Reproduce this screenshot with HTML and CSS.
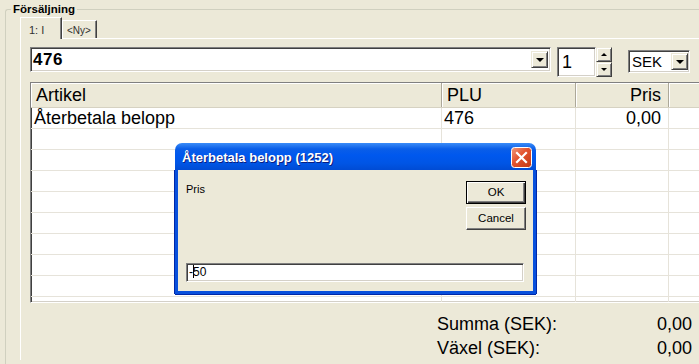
FILE: index.html
```html
<!doctype html>
<html>
    <head>
        <meta charset="utf-8">
        <link rel="stylesheet" href="styles.css">
    </head>
    <body>
        <fieldset class="group">
            <legend class="group_title">Försäljning</legend>
            <div class="tabs">
                <div class="tab tab_active">1: I</div>
                <div class="tab tab_new">&lt;Ny&gt;</div>
            </div>
            <div class="tab_page">
                <div class="controls">
                    <div class="combo combo_article sunken">
                        <span class="combo_text">476</span>
                        <span class="drop_button raised"><span class="arrow_down"></span></span>
                    </div>
                    <div class="spin">
                        <div class="spin_edit sunken">1</div>
                        <div class="spin_buttons">
                            <span class="spin_button raised"><span class="arrow_up_small"></span></span>
                            <span class="spin_button raised"><span class="arrow_down_small"></span></span>
                        </div>
                    </div>
                    <div class="combo combo_currency sunken">
                        <span class="currency_text">SEK</span>
                        <span class="drop_button raised"><span class="arrow_down"></span></span>
                    </div>
                </div>

                <div class="grid sunken">
                    <div class="grid_row grid_head">
                        <div class="cell head_cell">Artikel</div>
                        <div class="cell head_cell">PLU</div>
                        <div class="cell head_cell cell_right">Pris</div>
                        <div class="cell head_cell head_fill"></div>
                    </div>
                    <div class="grid_row">
                        <div class="cell">Återbetala belopp</div>
                        <div class="cell cell_plu">476</div>
                        <div class="cell cell_right">0,00</div>
                        <div class="cell"></div>
                    </div>
                    <div class="grid_row"><div class="cell"></div><div class="cell"></div><div class="cell"></div><div class="cell"></div></div>
                    <div class="grid_row"><div class="cell"></div><div class="cell"></div><div class="cell"></div><div class="cell"></div></div>
                    <div class="grid_row"><div class="cell"></div><div class="cell"></div><div class="cell"></div><div class="cell"></div></div>
                    <div class="grid_row"><div class="cell"></div><div class="cell"></div><div class="cell"></div><div class="cell"></div></div>
                    <div class="grid_row"><div class="cell"></div><div class="cell"></div><div class="cell"></div><div class="cell"></div></div>
                    <div class="grid_row"><div class="cell"></div><div class="cell"></div><div class="cell"></div><div class="cell"></div></div>
                    <div class="grid_row"><div class="cell"></div><div class="cell"></div><div class="cell"></div><div class="cell"></div></div>
                    <div class="grid_row"><div class="cell"></div><div class="cell"></div><div class="cell"></div><div class="cell"></div></div>
                    <div class="grid_row"><div class="cell"></div><div class="cell"></div><div class="cell"></div><div class="cell"></div></div>
                </div>

                <div class="totals">
                    <div class="total_row"><span>Summa (SEK):</span><span>0,00</span></div>
                    <div class="total_row"><span>Växel (SEK):</span><span>0,00</span></div>
                </div>
            </div>
        </fieldset>

        <div class="dialog">
            <div class="dialog_title">
                <span>Återbetala belopp (1252)</span>
                <span class="close_button">
                    <svg width="21" height="21" viewBox="0 0 21 21">
                        <defs>
                            <linearGradient id="closeGrad" x1="0" y1="0" x2="1" y2="1">
                                <stop offset="0" stop-color="#f09a7c"/>
                                <stop offset="0.45" stop-color="#e2522e"/>
                                <stop offset="1" stop-color="#c23a14"/>
                            </linearGradient>
                        </defs>
                        <rect x="0.5" y="0.5" width="20" height="20" rx="3" fill="url(#closeGrad)" stroke="#ffffff"/>
                        <path d="M6 6 L15 15 M15 6 L6 15" stroke="#ffffff" stroke-width="2.2" stroke-linecap="square"/>
                    </svg>
                </span>
            </div>
            <div class="dialog_body">
                <div class="dialog_top">
                    <div class="dialog_label">Pris</div>
                    <div class="dialog_buttons">
                        <div class="button button_default">OK</div>
                        <div class="button">Cancel</div>
                    </div>
                </div>
                <div class="dialog_edit sunken">-<span class="caret"></span>50</div>
            </div>
        </div>
    </body>
</html>
```

FILE: styles.css
```css
body {
    margin:0;
    width:699px;
    height:364px;
    overflow:hidden;
    background-color:#ece9d8;
    font-family:"Liberation Sans", Arial, sans-serif;
    color:#000000;
}

.sunken {
    box-sizing:border-box;
    border:1px solid;
    border-color:#808080 #ffffff #ffffff #808080;
    box-shadow:inset 1px 1px #404040, inset -1px -1px #d4d0c8;
    background-color:#ffffff;
}

.raised {
    box-sizing:border-box;
    border:1px solid;
    border-color:#ece9d8 #404040 #404040 #ece9d8;
    box-shadow:inset 1px 1px #ffffff, inset -1px -1px #808080;
    background-color:#ece9d8;
}

/* group box */

.group {
    box-sizing:border-box;
    margin:2px 0 0 5px;
    padding:0;
    min-width:0;
    height:362px;
    overflow:hidden;
    border:1px solid #d0d0bf;
    border-right:none;
    border-bottom:none;
    border-top-left-radius:3px;
}

.group_title {
    margin-left:5px;
    padding:0 2px;
    font-size:11.5px;
    font-weight:bold;
    line-height:14px;
}

/* tabs */

.tabs {
    display:flex;
    align-items:flex-end;
    height:22px;
    margin:1px 0 0 14px;
}

.tab {
    box-sizing:border-box;
    border-top:1px solid #ffffff;
    border-left:1px solid #ffffff;
    border-right:1px solid #404040;
    box-shadow:inset -1px 0 #808080;
    background-color:#ece9d8;
    font-size:11px;
    color:#303030;
}

.tab_active {
    position:relative;
    z-index:1;
    width:42px;
    height:22px;
    padding:6px 0 0 8px;
}

.tab_new {
    width:35px;
    height:18px;
    margin-bottom:1px;
    padding:4px 0 0 4px;
    font-size:10px;
}

.tab_page {
    margin:-1px 0 0 14px;
    border-top:1px solid #ffffff;
    border-left:1px solid #ffffff;
    padding:8px 0 0 9px;
}

/* controls */

.controls {
    display:flex;
    align-items:flex-start;
    height:30px;
}

.combo {
    display:flex;
    align-items:center;
    justify-content:space-between;
}

.combo_article {
    width:521px;
    height:25px;
    padding:0 2px 0 2px;
}

.combo_text {
    font-size:17px;
    font-weight:bold;
    letter-spacing:0.5px;
}

.drop_button {
    display:flex;
    align-items:center;
    justify-content:center;
    width:17px;
    height:17px;
}

.arrow_down {
    width:0;
    height:0;
    border-left:4px solid transparent;
    border-right:4px solid transparent;
    border-top:4px solid #000000;
    margin-top:1px;
}

.spin {
    display:flex;
    margin-left:6px;
    height:30px;
}

.spin_edit {
    width:39px;
    height:30px;
    padding:3px 0 0 4px;
    font-size:18px;
    line-height:22px;
}

.spin_buttons {
    display:flex;
    flex-direction:column;
}

.spin_button {
    display:flex;
    align-items:center;
    justify-content:center;
    width:16px;
    height:15px;
}

.arrow_up_small {
    width:0;
    height:0;
    border-left:3px solid transparent;
    border-right:3px solid transparent;
    border-bottom:3px solid #000000;
}

.arrow_down_small {
    width:0;
    height:0;
    border-left:3px solid transparent;
    border-right:3px solid transparent;
    border-top:3px solid #000000;
}

.combo_currency {
    width:62px;
    height:23px;
    margin:3px 0 0 16px;
    padding:0 1px 0 3px;
}

.currency_text {
    font-size:15px;
}

/* grid */

.grid {
    width:690px;
    height:221px;
    margin-top:5px;
    overflow:hidden;
}

.grid_row {
    display:grid;
    grid-template-columns:411px 134px 93px 1fr;
    height:21px;
    box-sizing:border-box;
    border-bottom:1px solid #e6e3da;
    font-size:18px;
    line-height:20px;
}

.cell {
    border-right:1px solid #e6e3da;
    padding-left:3px;
    white-space:nowrap;
    overflow:hidden;
}

.cell_plu {
    padding-left:2px;
}

.cell_right {
    text-align:right;
    padding:0 7px 0 0;
}

.grid_head {
    height:25px;
    border-bottom:1px solid #d6d2c2;
    background-color:#ece9d8;
    line-height:24px;
}

.head_cell {
    border-right:1px solid #aca899;
    box-shadow:inset 1px 1px #ffffff;
    padding-left:5px;
}

.head_cell.cell_right {
    padding:0 7px 0 0;
}

.head_fill {
    border-right:none;
}

/* totals */

.totals {
    margin-top:9px;
    padding-left:407px;
}

.total_row {
    display:flex;
    justify-content:space-between;
    width:255px;
    font-size:18px;
    line-height:24px;
}

/* dialog */

.dialog {
    position:absolute;
    left:175px;
    top:143px;
    width:361px;
    display:flex;
    flex-direction:column;
}

.dialog_title {
    display:flex;
    justify-content:space-between;
    height:27px;
    box-sizing:border-box;
    padding:5px 4px 0 7px;
    border-radius:7px 7px 0 0;
    background:linear-gradient(to bottom, #3a8cf8 0%, #2a7cf2 8%, #0a5ee8 22%, #0058ee 45%, #0055e5 75%, #004bd4 100%);
    color:#ffffff;
    font-size:13px;
    font-weight:bold;
    line-height:20px;
    text-shadow:1px 1px #0a1e80;
}

.close_button {
    display:block;
    width:21px;
    height:21px;
    margin-top:-1px;
}

.dialog_body {
    box-sizing:border-box;
    height:124px;
    padding:11px 7px 0 8px;
    border:3px solid #0850dc;
    border-top:none;
    box-shadow:-1px 0 #0028a8, 1px 0 #0028a8, 0 1px #0028a8;
    background-color:#ece9d8;
}

.dialog_top {
    display:flex;
    justify-content:space-between;
    height:49px;
}

.dialog_label {
    margin-top:2px;
    font-size:11px;
    line-height:13px;
}

.dialog_buttons {
    display:flex;
    flex-direction:column;
    gap:3px;
}

.button {
    box-sizing:border-box;
    width:60px;
    height:23px;
    border:1px solid;
    border-color:#ffffff #404040 #404040 #ffffff;
    box-shadow:inset -1px -1px #808080;
    font-size:11.5px;
    line-height:21px;
    text-align:center;
}

.button_default {
    border:1px solid #000000;
    box-shadow:inset 1px 1px #ffffff, inset -1px -1px #404040, inset -2px -2px #808080;
}

.dialog_edit {
    margin-top:33px;
    width:338px;
    height:19px;
    padding-left:2px;
    font-size:12px;
    line-height:17px;
}

.caret {
    display:inline-block;
    width:1px;
    height:13px;
    margin:0 -1px 0 0;
    vertical-align:-2px;
    background-color:#000000;
}
```
